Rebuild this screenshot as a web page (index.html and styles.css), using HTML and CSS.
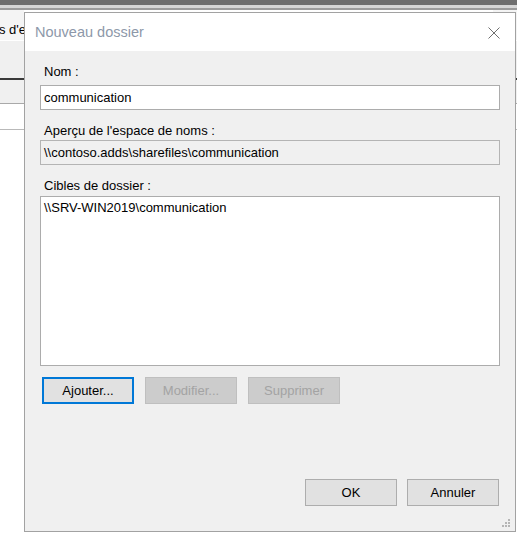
FILE: index.html
```html
<!DOCTYPE html>
<html lang="fr">
<head>
<meta charset="utf-8">
<title>Nouveau dossier</title>
<link rel="stylesheet" href="styles.css">
</head>
<body>
<div class="desktop">
  <div class="app">
    <div class="app-top"></div>
    <div class="app-tabs"><span class="app-tab-text">s d'e</span></div>
    <div class="app-toolbar"></div>
    <div class="app-header"></div>
    <div class="app-list"></div>
  </div>

  <div class="dialog">
    <div class="titlebar">
      <span class="title">Nouveau dossier</span>
      <svg class="close" width="12" height="12" viewBox="0 0 12 12" aria-hidden="true">
        <path d="M0.5 0.5 L11.5 11.5 M11.5 0.5 L0.5 11.5" stroke="#6f6f6f" stroke-width="1" fill="none"/>
      </svg>
    </div>
    <div class="content">
      <label class="lbl lbl-first">Nom :</label>
      <div class="field">communication</div>
      <label class="lbl">Aperçu de l'espace de noms :</label>
      <div class="field readonly">\\contoso.adds\sharefiles\communication</div>
      <label class="lbl">Cibles de dossier :</label>
      <div class="listbox">
        <div class="item">\\SRV-WIN2019\communication</div>
      </div>
      <div class="row-actions">
        <button class="btn focused">Ajouter...</button>
        <button class="btn disabled">Modifier...</button>
        <button class="btn disabled">Supprimer</button>
      </div>
      <div class="spacer"></div>
      <div class="row-footer">
        <button class="btn">OK</button>
        <button class="btn">Annuler</button>
      </div>
    </div>
    <svg class="grip" width="11" height="10" viewBox="0 0 11 10" aria-hidden="true">
      <rect x="8" y="0" width="2" height="2" fill="#b5b5b5"/>
      <rect x="5" y="3" width="2" height="2" fill="#b5b5b5"/>
      <rect x="8" y="3" width="2" height="2" fill="#b5b5b5"/>
      <rect x="2" y="6" width="2" height="2" fill="#b5b5b5"/>
      <rect x="5" y="6" width="2" height="2" fill="#b5b5b5"/>
      <rect x="8" y="6" width="2" height="2" fill="#b5b5b5"/>
    </svg>
  </div>
</div>
</body>
</html>
```

FILE: styles.css
```css
* { box-sizing: border-box; }
html, body {
  margin: 0;
  padding: 0;
  width: 517px;
  height: 534px;
  overflow: hidden;
  background: #ffffff;
  font-family: "Liberation Sans", Arial, sans-serif;
  font-size: 13px;
  color: #000;
}
.desktop {
  position: relative;
  width: 517px;
  height: 534px;
}
.app {
  display: flex;
  flex-direction: column;
  width: 517px;
  height: 534px;
  background: #fff;
}
.app-top {
  height: 10px;
  background: #6e6e6e;
  border-bottom: 2px solid #9c9c9c;
  box-shadow: inset 0 -3px 0 #d6d6d6;
}
.app-tabs {
  height: 30px;
  width: 24px;
  background: #f4f4f4;
  padding-top: 12px;
  line-height: 15px;
  white-space: nowrap;
  overflow: hidden;
  box-shadow: 493px 0 0 #f4f4f4;
}
.app-tab-text {
  display: block;
  margin-left: -1px;
}
.app-toolbar {
  height: 40px;
  background: #f0f0f0;
  border-top: 1px solid #ffffff;
  border-bottom: 2px solid #3a3a3a;
}
.app-header {
  height: 24px;
  background: #f0f0f0;
  border-bottom: 1px solid #a9a9a9;
}
.app-list {
  height: 26px;
  background: #fff;
  border-bottom: 1px solid #b9b9b9;
}

.dialog {
  position: absolute;
  left: 24px;
  top: 12px;
  width: 492px;
  height: 520px;
  border: 1px solid #a2a2a2;
  background: #f0f0f0;
  display: flex;
  flex-direction: column;
}
.titlebar {
  height: 38px;
  background: #ffffff;
  display: flex;
  align-items: center;
  justify-content: space-between;
  padding: 0 15px 0 10px;
  flex: none;
}
.title {
  font-size: 14.5px;
  color: #8d98a9;
}
.close { display: block; margin-top: 1px; }

.content {
  flex: 1;
  display: flex;
  flex-direction: column;
  padding: 13px 15px 25px 15px;
}
.lbl {
  display: block;
  line-height: 15px;
  padding-left: 4px;
  margin-top: 13px;
  margin-bottom: 2px;
}
.lbl-first {
  margin-top: 0;
  margin-bottom: 6px;
}
.field {
  height: 25px;
  width: 460px;
  background: #fff;
  border: 1px solid #acacac;
  padding: 0 3px;
  line-height: 23px;
  white-space: nowrap;
}
.field.readonly {
  background: #f0f0f0;
  border-color: #b4b4b4;
}
.listbox {
  margin-top: 1px;
  width: 460px;
  height: 170px;
  background: #fff;
  border: 1px solid #acacac;
  padding: 3px 3px;
}
.item { line-height: 15px; }

.row-actions {
  display: flex;
  gap: 11px;
  margin-top: 11px;
  padding-left: 2px;
}
.btn {
  width: 92px;
  height: 27px;
  margin: 0;
  padding: 0;
  font-family: "Liberation Sans", Arial, sans-serif;
  font-size: 13px;
  color: #000;
  background: #e1e1e1;
  border: 1px solid #adadad;
  border-radius: 0;
}
.btn.focused {
  border: 2px solid #0078d7;
}
.btn.disabled {
  background: #cccccc;
  border-color: #bfbfbf;
  color: #a3a3a3;
}
.spacer { flex: 1; }
.row-footer {
  display: flex;
  justify-content: flex-end;
  gap: 10px;
  padding-right: 1px;
}
.grip {
  position: absolute;
  right: 4px;
  bottom: 2px;
}
```
